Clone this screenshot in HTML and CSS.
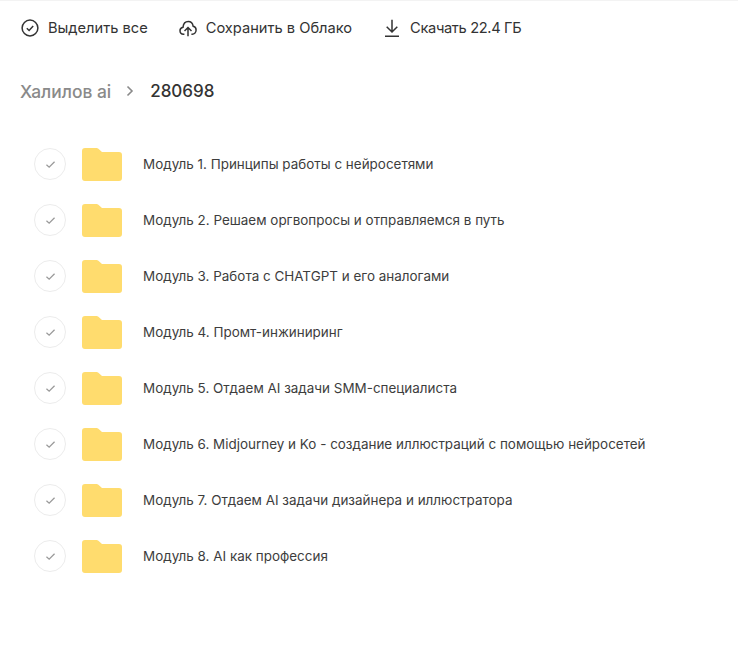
FILE: index.html
```html
<!DOCTYPE html>
<html lang="ru">
<head>
  <meta charset="UTF-8">
  <title>Облако</title>
  <link rel="stylesheet" href="styles.css">
</head>
<body>
  <div class="toolbar">
    <div class="tool">
      <svg class="tool-icon" viewBox="0 0 18 18"><circle cx="9" cy="9" r="7.9"/><path d="M5.800 9.300l2.300 2.200 4.100-4.500"/></svg>
      <span>Выделить все</span>
    </div>
    <div class="tool">
      <svg class="tool-icon" viewBox="0 0 18 18"><path d="M5.400 15.200H4.500C2.500 15.200 1 13.700 1 11.800c0-1.800 1.300-3.200 3-3.500C4.400 5 6.500 2.600 9.200 2.600c2.500 0 4.500 2 5 4.700 1.700.4 2.900 1.900 2.900 3.800 0 2.300-1.700 4.100-3.900 4.100h-.8"/><path d="M9 17.300V8.600M5.500 12L9 8.500l3.500 3.500"/></svg>
      <span>Сохранить в Облако</span>
    </div>
    <div class="tool tool-download">
      <svg class="tool-icon" viewBox="0 0 18 18"><path d="M9 .8v12M3.700 7.700L9 13l5.300-5.300M2 17.200h14"/></svg>
      <span>Скачать 22.4 ГБ</span>
    </div>
  </div>

  <div class="crumbs">
    <span class="crumb-parent">Халилов ai</span>
    <svg class="crumb-arrow" viewBox="0 0 10 12"><path d="M2.500 1.500L7 6l-4.500 4.500"/></svg>
    <span class="crumb-current">280698</span>
  </div>

  <ul class="folders">
    <li class="folder">
      <span class="check"><svg viewBox="0 0 12 10"><path d="M1.500 5.300l3 2.700 6-6"/></svg></span>
      <svg class="folder-icon" viewBox="0 0 40 33"><path d="M0 3a3 3 0 0 1 3-3h11.500a3 3 0 0 1 1.900.7L20 4h17a3 3 0 0 1 3 3v23a3 3 0 0 1-3 3H3a3 3 0 0 1-3-3z"/></svg>
      <span class="folder-name">Модуль 1. Принципы работы с нейросетями</span>
    </li>
    <li class="folder">
      <span class="check"><svg viewBox="0 0 12 10"><path d="M1.500 5.300l3 2.700 6-6"/></svg></span>
      <svg class="folder-icon" viewBox="0 0 40 33"><path d="M0 3a3 3 0 0 1 3-3h11.500a3 3 0 0 1 1.900.7L20 4h17a3 3 0 0 1 3 3v23a3 3 0 0 1-3 3H3a3 3 0 0 1-3-3z"/></svg>
      <span class="folder-name">Модуль 2. Решаем оргвопросы и отправляемся в путь</span>
    </li>
    <li class="folder">
      <span class="check"><svg viewBox="0 0 12 10"><path d="M1.500 5.300l3 2.700 6-6"/></svg></span>
      <svg class="folder-icon" viewBox="0 0 40 33"><path d="M0 3a3 3 0 0 1 3-3h11.500a3 3 0 0 1 1.900.7L20 4h17a3 3 0 0 1 3 3v23a3 3 0 0 1-3 3H3a3 3 0 0 1-3-3z"/></svg>
      <span class="folder-name">Модуль 3. Работа с CHATGPT и его аналогами</span>
    </li>
    <li class="folder">
      <span class="check"><svg viewBox="0 0 12 10"><path d="M1.500 5.300l3 2.700 6-6"/></svg></span>
      <svg class="folder-icon" viewBox="0 0 40 33"><path d="M0 3a3 3 0 0 1 3-3h11.500a3 3 0 0 1 1.900.7L20 4h17a3 3 0 0 1 3 3v23a3 3 0 0 1-3 3H3a3 3 0 0 1-3-3z"/></svg>
      <span class="folder-name">Модуль 4. Промт-инжиниринг</span>
    </li>
    <li class="folder">
      <span class="check"><svg viewBox="0 0 12 10"><path d="M1.500 5.300l3 2.700 6-6"/></svg></span>
      <svg class="folder-icon" viewBox="0 0 40 33"><path d="M0 3a3 3 0 0 1 3-3h11.500a3 3 0 0 1 1.900.7L20 4h17a3 3 0 0 1 3 3v23a3 3 0 0 1-3 3H3a3 3 0 0 1-3-3z"/></svg>
      <span class="folder-name">Модуль 5. Отдаем AI задачи SMM-специалиста</span>
    </li>
    <li class="folder">
      <span class="check"><svg viewBox="0 0 12 10"><path d="M1.500 5.300l3 2.700 6-6"/></svg></span>
      <svg class="folder-icon" viewBox="0 0 40 33"><path d="M0 3a3 3 0 0 1 3-3h11.500a3 3 0 0 1 1.900.7L20 4h17a3 3 0 0 1 3 3v23a3 3 0 0 1-3 3H3a3 3 0 0 1-3-3z"/></svg>
      <span class="folder-name">Модуль 6. Midjourney и Ko - создание иллюстраций с помощью нейросетей</span>
    </li>
    <li class="folder">
      <span class="check"><svg viewBox="0 0 12 10"><path d="M1.500 5.300l3 2.700 6-6"/></svg></span>
      <svg class="folder-icon" viewBox="0 0 40 33"><path d="M0 3a3 3 0 0 1 3-3h11.500a3 3 0 0 1 1.900.7L20 4h17a3 3 0 0 1 3 3v23a3 3 0 0 1-3 3H3a3 3 0 0 1-3-3z"/></svg>
      <span class="folder-name">Модуль 7. Отдаем AI задачи дизайнера и иллюстратора</span>
    </li>
    <li class="folder">
      <span class="check"><svg viewBox="0 0 12 10"><path d="M1.500 5.300l3 2.700 6-6"/></svg></span>
      <svg class="folder-icon" viewBox="0 0 40 33"><path d="M0 3a3 3 0 0 1 3-3h11.500a3 3 0 0 1 1.900.7L20 4h17a3 3 0 0 1 3 3v23a3 3 0 0 1-3 3H3a3 3 0 0 1-3-3z"/></svg>
      <span class="folder-name">Модуль 8. AI как профессия</span>
    </li>
  </ul>
</body>
</html>
```

FILE: styles.css
```css
body {
  margin: 0;
  background: #fff;
  font-family: Inter, Roboto, sans-serif;
  color: #333;
}

.toolbar {
  display: flex;
  gap: 31px;
  height: 55px;
  padding-left: 21px;
  align-items: center;
  border-top: 1px solid #f3f3f3;
  box-sizing: border-box;
}

.tool {
  display: flex;
  align-items: center;
  gap: 9px;
  font-size: 14.65px;
}

.tool-download {
  letter-spacing: -0.35px;
}

.tool-icon {
  width: 18px;
  height: 18px;
  fill: none;
  stroke: #333;
  stroke-width: 1.5;
}

.crumbs {
  display: flex;
  align-items: center;
  height: 24px;
  margin-top: 24px;
  padding-left: 20px;
  font-size: 17.4px;
}

.crumb-parent {
  color: #8a8a8a;
  font-weight: 500;
}

.crumb-arrow {
  width: 10px;
  height: 12px;
  margin: 0 15px 0 14px;
  fill: none;
  stroke: #8a8a8a;
  stroke-width: 1.6;
}

.crumb-current {
  font-size: 17px;
  font-weight: 500;
}

.folders {
  list-style: none;
  margin: 33px 0 0;
  padding: 0 0 0 34px;
}

.folder {
  display: flex;
  align-items: center;
  height: 56px;
}

.check {
  display: flex;
  align-items: center;
  justify-content: center;
  width: 32px;
  height: 32px;
  border: 1px solid #ececec;
  border-radius: 50%;
  box-sizing: border-box;
}

.check svg {
  width: 11px;
  height: 9px;
  fill: none;
  stroke: #999;
  stroke-width: 1.4;
}

.folder-icon {
  width: 40px;
  height: 33px;
  margin-left: 16px;
  fill: #ffdc6e;
}

.folder-name {
  margin-left: 21px;
  font-size: 13.45px;
  color: #3d3d3d;
}
```
